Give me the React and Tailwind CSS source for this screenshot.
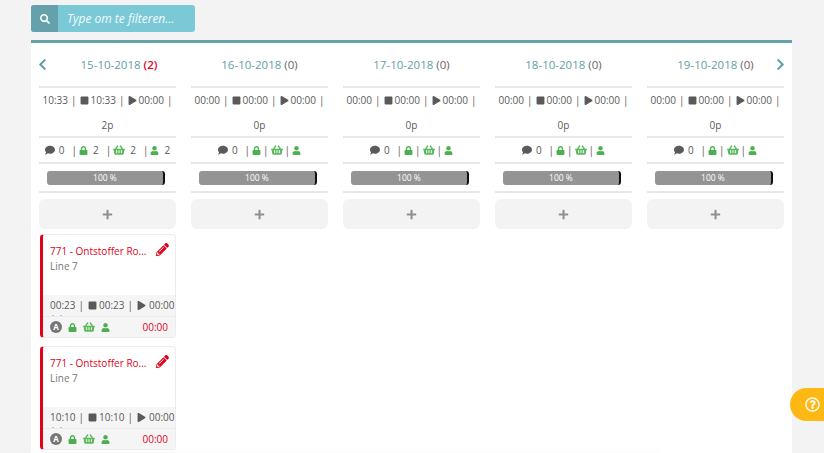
import React from "react";
import {
  FaChevronLeft,
  FaChevronRight,
  FaComment,
  FaLock,
  FaPencilAlt,
  FaPlay,
  FaPlus,
  FaRegQuestionCircle,
  FaSearch,
  FaShoppingBasket,
  FaStop,
  FaUser,
} from "react-icons/fa";

const days = [
  { date: "15-10-2018", count: 2, times: ["10:33", "10:33", "00:00"], people: "2p", comments: 0, stats: [2, 2, 2] },
  { date: "16-10-2018", count: 0, times: ["00:00", "00:00", "00:00"], people: "0p", comments: 0, stats: [] },
  { date: "17-10-2018", count: 0, times: ["00:00", "00:00", "00:00"], people: "0p", comments: 0, stats: [] },
  { date: "18-10-2018", count: 0, times: ["00:00", "00:00", "00:00"], people: "0p", comments: 0, stats: [] },
  { date: "19-10-2018", count: 0, times: ["00:00", "00:00", "00:00"], people: "0p", comments: 0, stats: [] },
];

const cards = [{ time: "00:23" }, { time: "10:10" }];

function Rule() {
  return <div className="h-[2px] bg-[#e8e8e8]" />;
}

function JobCard({ time }) {
  return (
    <div className="ml-[1px] h-[104px] flex flex-col rounded-[4px] border border-[#ececec] border-l-[3px] border-l-[#e2001a] bg-white overflow-hidden">
      <div className="h-[60px] shrink-0 pl-[7px] pr-[6px] pt-[8px] relative">
        <div className="text-[10px] leading-[16px] text-[#d9061c]">771 - Ontstoffer Ro...</div>
        <div className="text-[10px] leading-[14px] text-[#777]">Line 7</div>
        <FaPencilAlt className="absolute right-[6px] top-[8px] text-[13px] text-[#e2001a]" />
      </div>
      <div className="h-[21px] shrink-0 pl-[7px] bg-[#f5f5f5] text-[10px] text-[#5a5a5a] whitespace-nowrap overflow-hidden">
        <div className="h-[20px] flex items-center">
          {time}
          <span className="ml-[3px] mr-[4px]">|</span>
          <FaStop className="mr-[2px] text-[9px]" />
          {time}
          <span className="ml-[3px] mr-[4px]">|</span>
          <FaPlay className="mr-[3px] text-[9px]" />
          00:00
        </div>
        {/* tops of the clipped second line */}
        <div className="flex gap-[6px] pl-[2px]">
          <span className="w-[2px] h-[1px] bg-[#c4c4c4]" />
          <span className="w-[2px] h-[1px] bg-[#c4c4c4]" />
        </div>
      </div>
      <div className="flex-1 flex items-center pl-[7px] pr-[7px] bg-[#f5f5f5] border-t border-[#ececec]">
        <span className="w-[12px] h-[12px] rounded-full bg-[#777] text-white text-[8px] font-bold flex items-center justify-center">A</span>
        <FaLock className="ml-[6px] text-[9px] text-[#4caf50]" />
        <FaShoppingBasket className="ml-[6px] text-[12px] text-[#5cb85c]" />
        <FaUser className="ml-[6px] text-[9px] text-[#4caf50]" />
        <span className="ml-auto text-[10px] text-[#d9061c]">00:00</span>
      </div>
    </div>
  );
}

function DayColumn({ day, first, last }) {
  const [lock, basket, user] = day.stats;
  return (
    <div className="min-w-0">
      <div className={`relative h-[43px] flex items-center justify-center pt-[1px] text-[11.5px] whitespace-nowrap ${first ? "pl-[23px]" : ""}`}>
        {first && <FaChevronLeft className="absolute left-[-3px] top-[15px] text-[13px] text-[#5f9ea9]" />}
        {last && <FaChevronRight className="absolute right-[-3px] top-[15px] text-[13px] text-[#5f9ea9]" />}
        <span className="text-[#5f9ea9]">{day.date}</span>
        {day.count > 0 ? (
          <span className="ml-[3px] font-semibold text-[#e2001a]">({day.count})</span>
        ) : (
          <span className="ml-[3px] text-[#666]">({day.count})</span>
        )}
      </div>
      <Rule />
      <div className="h-[48px] text-center text-[10px] text-[#5a5a5a] whitespace-nowrap">
        <div className="flex items-center justify-center h-[24px]">
          {day.times[0]}
          <span className="ml-[3px] mr-[3px]">|</span>
          <FaStop className="mr-[2px] text-[9px]" />
          {day.times[1]}
          <span className="ml-[3px] mr-[3px]">|</span>
          <FaPlay className="mr-[2px] text-[9px]" />
          {day.times[2]}
          <span className="ml-[3px]">|</span>
        </div>
        <div className="h-[24px] pt-[1px] leading-[24px]">{day.people}</div>
      </div>
      <Rule />
      <div className="h-[24px] flex items-center justify-center text-[10px] text-[#5a5a5a] whitespace-nowrap">
        <FaComment className="text-[10px]" />
        <span className="ml-[4px] mr-[7px]">{day.comments}</span>
        <span>|</span>
        <FaLock className="ml-[2px] text-[9px] text-[#4caf50]" />
        {lock !== undefined && <span className="ml-[5px] mr-[5px]">{lock}</span>}
        <span className="ml-[2px]">|</span>
        <FaShoppingBasket className="ml-[2px] text-[12px] text-[#5cb85c]" />
        {basket !== undefined && <span className="ml-[5px] mr-[5px]">{basket}</span>}
        <span className="ml-[2px]">|</span>
        <FaUser className="ml-[2px] text-[9px] text-[#4caf50]" />
        {user !== undefined && <span className="ml-[5px]">{user}</span>}
      </div>
      <Rule />
      <div className="h-[27px] flex items-center pl-[8px]">
        <div className="w-[118px] h-[14px] rounded-[3px] bg-[#949494] border-r-[2px] border-[#111] text-white text-[8.5px] leading-[14px] text-center">
          100 %
        </div>
      </div>
      <Rule />
      <div className="mt-[6px] h-[30px] rounded-[6px] bg-[#f3f3f3] flex items-center justify-center">
        <FaPlus className="text-[11px] text-[#8f8f8f]" />
      </div>
      {first && (
        <div className="mt-[5px] flex flex-col gap-[8px]">
          {cards.map((c) => (
            <JobCard key={c.time} time={c.time} />
          ))}
        </div>
      )}
    </div>
  );
}

export default function App() {
  return (
    <div className="relative h-[453px] overflow-hidden bg-[#f3f3f3] pl-[31px] pr-[32px] pt-[5px] font-['Open_Sans',sans-serif]">
      <div className="w-[164px] h-[27px] flex rounded-[3px] overflow-hidden bg-[#7bc9d6]">
        <div className="w-[27px] flex items-center justify-center bg-[#64a1ac]">
          <FaSearch className="text-[10px] text-white" />
        </div>
        <div className="pl-[9px] text-[12px] leading-[27px] italic text-[#f1fafb]">Type om te filteren...</div>
      </div>
      <div className="relative mt-[8px] h-[420px] border-t-[3px] border-[#64a1ac] bg-white px-[8px]">
        {/* faint shadow along the bottom of the page */}
        <div className="absolute bottom-0 left-0 w-[630px] h-[12px] bg-gradient-to-t from-[#f8f8f8] to-transparent" />
        <div className="relative grid grid-cols-5 gap-x-[15px]">
          {days.map((d, i) => (
            <DayColumn key={d.date} day={d} first={i === 0} last={i === days.length - 1} />
          ))}
        </div>
      </div>
      <div className="absolute right-0 top-[388px] w-[34px] h-[33px] rounded-l-[17px] bg-[#fdb813] flex items-center pl-[15px]">
        <FaRegQuestionCircle className="text-[15px] text-white shrink-0" />
      </div>
    </div>
  );
}
